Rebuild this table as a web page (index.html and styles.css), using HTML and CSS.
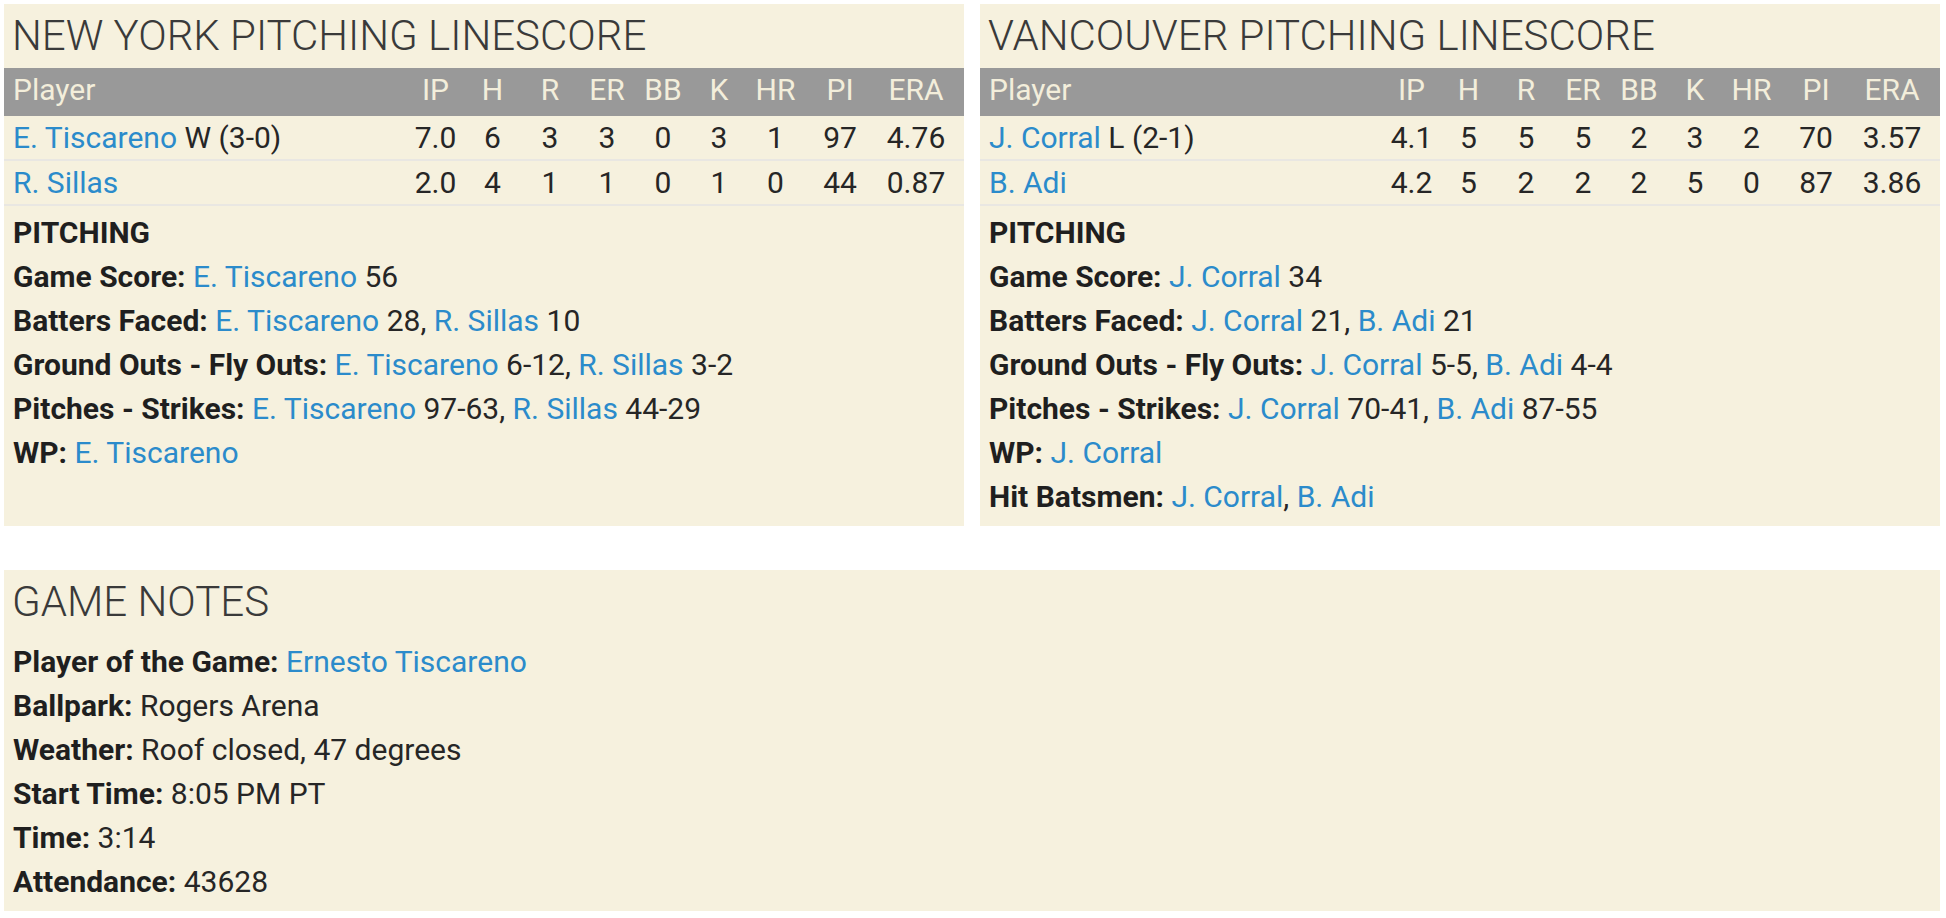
FILE: index.html
```html
<!DOCTYPE html>
<html>
<head>
<meta charset="utf-8">
<link rel="stylesheet" href="styles.css">
</head>
<body>
<div class="page">
  <div class="panels">
    <section class="panel">
      <h2 class="panel-title">NEW YORK PITCHING LINESCORE</h2>
      <table class="linescore">
        <thead>
          <tr><th class="c-player">Player</th><th class="c-ip">IP</th><th class="c-h">H</th><th class="c-r">R</th><th class="c-er">ER</th><th class="c-bb">BB</th><th class="c-k">K</th><th class="c-hr">HR</th><th class="c-pi">PI</th><th class="c-era">ERA</th></tr>
        </thead>
        <tbody>
          <tr><td class="c-player"><a>E. Tiscareno</a> W (3-0)</td><td>7.0</td><td>6</td><td>3</td><td>3</td><td>0</td><td>3</td><td>1</td><td>97</td><td class="c-era">4.76</td></tr>
          <tr><td class="c-player"><a>R. Sillas</a></td><td>2.0</td><td>4</td><td>1</td><td>1</td><td>0</td><td>1</td><td>0</td><td>44</td><td class="c-era">0.87</td></tr>
        </tbody>
      </table>
      <div class="notes notes-pitching">
        <div class="line heading">PITCHING</div>
        <div class="line"><b>Game Score:</b> <a>E. Tiscareno</a> 56</div>
        <div class="line"><b>Batters Faced:</b> <a>E. Tiscareno</a> 28, <a>R. Sillas</a> 10</div>
        <div class="line"><b>Ground Outs - Fly Outs:</b> <a>E. Tiscareno</a> 6-12, <a>R. Sillas</a> 3-2</div>
        <div class="line"><b>Pitches - Strikes:</b> <a>E. Tiscareno</a> 97-63, <a>R. Sillas</a> 44-29</div>
        <div class="line"><b>WP:</b> <a>E. Tiscareno</a></div>
      </div>
    </section>
    <section class="panel">
      <h2 class="panel-title">VANCOUVER PITCHING LINESCORE</h2>
      <table class="linescore">
        <thead>
          <tr><th class="c-player">Player</th><th class="c-ip">IP</th><th class="c-h">H</th><th class="c-r">R</th><th class="c-er">ER</th><th class="c-bb">BB</th><th class="c-k">K</th><th class="c-hr">HR</th><th class="c-pi">PI</th><th class="c-era">ERA</th></tr>
        </thead>
        <tbody>
          <tr><td class="c-player"><a>J. Corral</a> L (2-1)</td><td>4.1</td><td>5</td><td>5</td><td>5</td><td>2</td><td>3</td><td>2</td><td>70</td><td class="c-era">3.57</td></tr>
          <tr><td class="c-player"><a>B. Adi</a></td><td>4.2</td><td>5</td><td>2</td><td>2</td><td>2</td><td>5</td><td>0</td><td>87</td><td class="c-era">3.86</td></tr>
        </tbody>
      </table>
      <div class="notes notes-pitching">
        <div class="line heading">PITCHING</div>
        <div class="line"><b>Game Score:</b> <a>J. Corral</a> 34</div>
        <div class="line"><b>Batters Faced:</b> <a>J. Corral</a> 21, <a>B. Adi</a> 21</div>
        <div class="line"><b>Ground Outs - Fly Outs:</b> <a>J. Corral</a> 5-5, <a>B. Adi</a> 4-4</div>
        <div class="line"><b>Pitches - Strikes:</b> <a>J. Corral</a> 70-41, <a>B. Adi</a> 87-55</div>
        <div class="line"><b>WP:</b> <a>J. Corral</a></div>
        <div class="line"><b>Hit Batsmen:</b> <a>J. Corral</a>, <a>B. Adi</a></div>
      </div>
    </section>
  </div>
  <section class="panel game-notes">
    <h2 class="panel-title">GAME NOTES</h2>
    <div class="notes">
      <div class="line"><b>Player of the Game:</b> <a>Ernesto Tiscareno</a></div>
      <div class="line"><b>Ballpark:</b> Rogers Arena</div>
      <div class="line"><b>Weather:</b> Roof closed, 47 degrees</div>
      <div class="line"><b>Start Time:</b> 8:05 PM PT</div>
      <div class="line"><b>Time:</b> 3:14</div>
      <div class="line"><b>Attendance:</b> 43628</div>
    </div>
  </section>
</div>
</body>
</html>
```

FILE: styles.css
```css
html, body {
  margin: 0;
  padding: 0;
  background: #ffffff;
}

body {
  font-family: Roboto, "Liberation Sans", sans-serif;
  font-size: 30px;
  color: #262626;
}

.page {
  padding: 4px 6px 0 4px;
}

.panels {
  display: flex;
  gap: 16px;
}

.panels .panel {
  flex: 1 1 0;
  min-width: 0;
}

.panel {
  background: #f6f1de;
  padding-top: 7px;
}

.panel-title {
  margin: 0 0 7px 0;
  padding: 0 8px;
  font-size: 42px;
  font-weight: 300;
  line-height: 50px;
  color: #3a3a3a;
}

.linescore {
  width: 100%;
  border-collapse: collapse;
  table-layout: fixed;
}

.linescore th {
  background: #999999;
  color: #f3eedb;
  font-weight: 400;
  height: 42px;
  padding: 0 0 6px 0;
  text-align: center;
}

.linescore td {
  height: 43px;
  padding: 0;
  text-align: center;
  border-bottom: 2px solid #e9e7e2;
  white-space: nowrap;
}

.linescore .c-player {
  text-align: left;
  padding-left: 9px;
}

.c-ip { width: 57px; }
.c-h { width: 57px; }
.c-r { width: 58px; }
.c-er { width: 56px; }
.c-bb { width: 56px; }
.c-k { width: 56px; }
.c-hr { width: 57px; }
.c-pi { width: 72px; }
.linescore .c-era { width: 80px; padding-right: 8px; }

a {
  color: #2b8bcb;
  text-decoration: none;
}

b, .heading {
  font-weight: 700;
  color: #1f1f1f;
}

.notes {
  padding: 0 9px 7px 9px;
}

.notes-pitching {
  padding-top: 5px;
}

.line {
  line-height: 44px;
  white-space: nowrap;
}

.game-notes {
  margin-top: 44px;
}

.game-notes .panel-title {
  margin-bottom: 13px;
}
```
